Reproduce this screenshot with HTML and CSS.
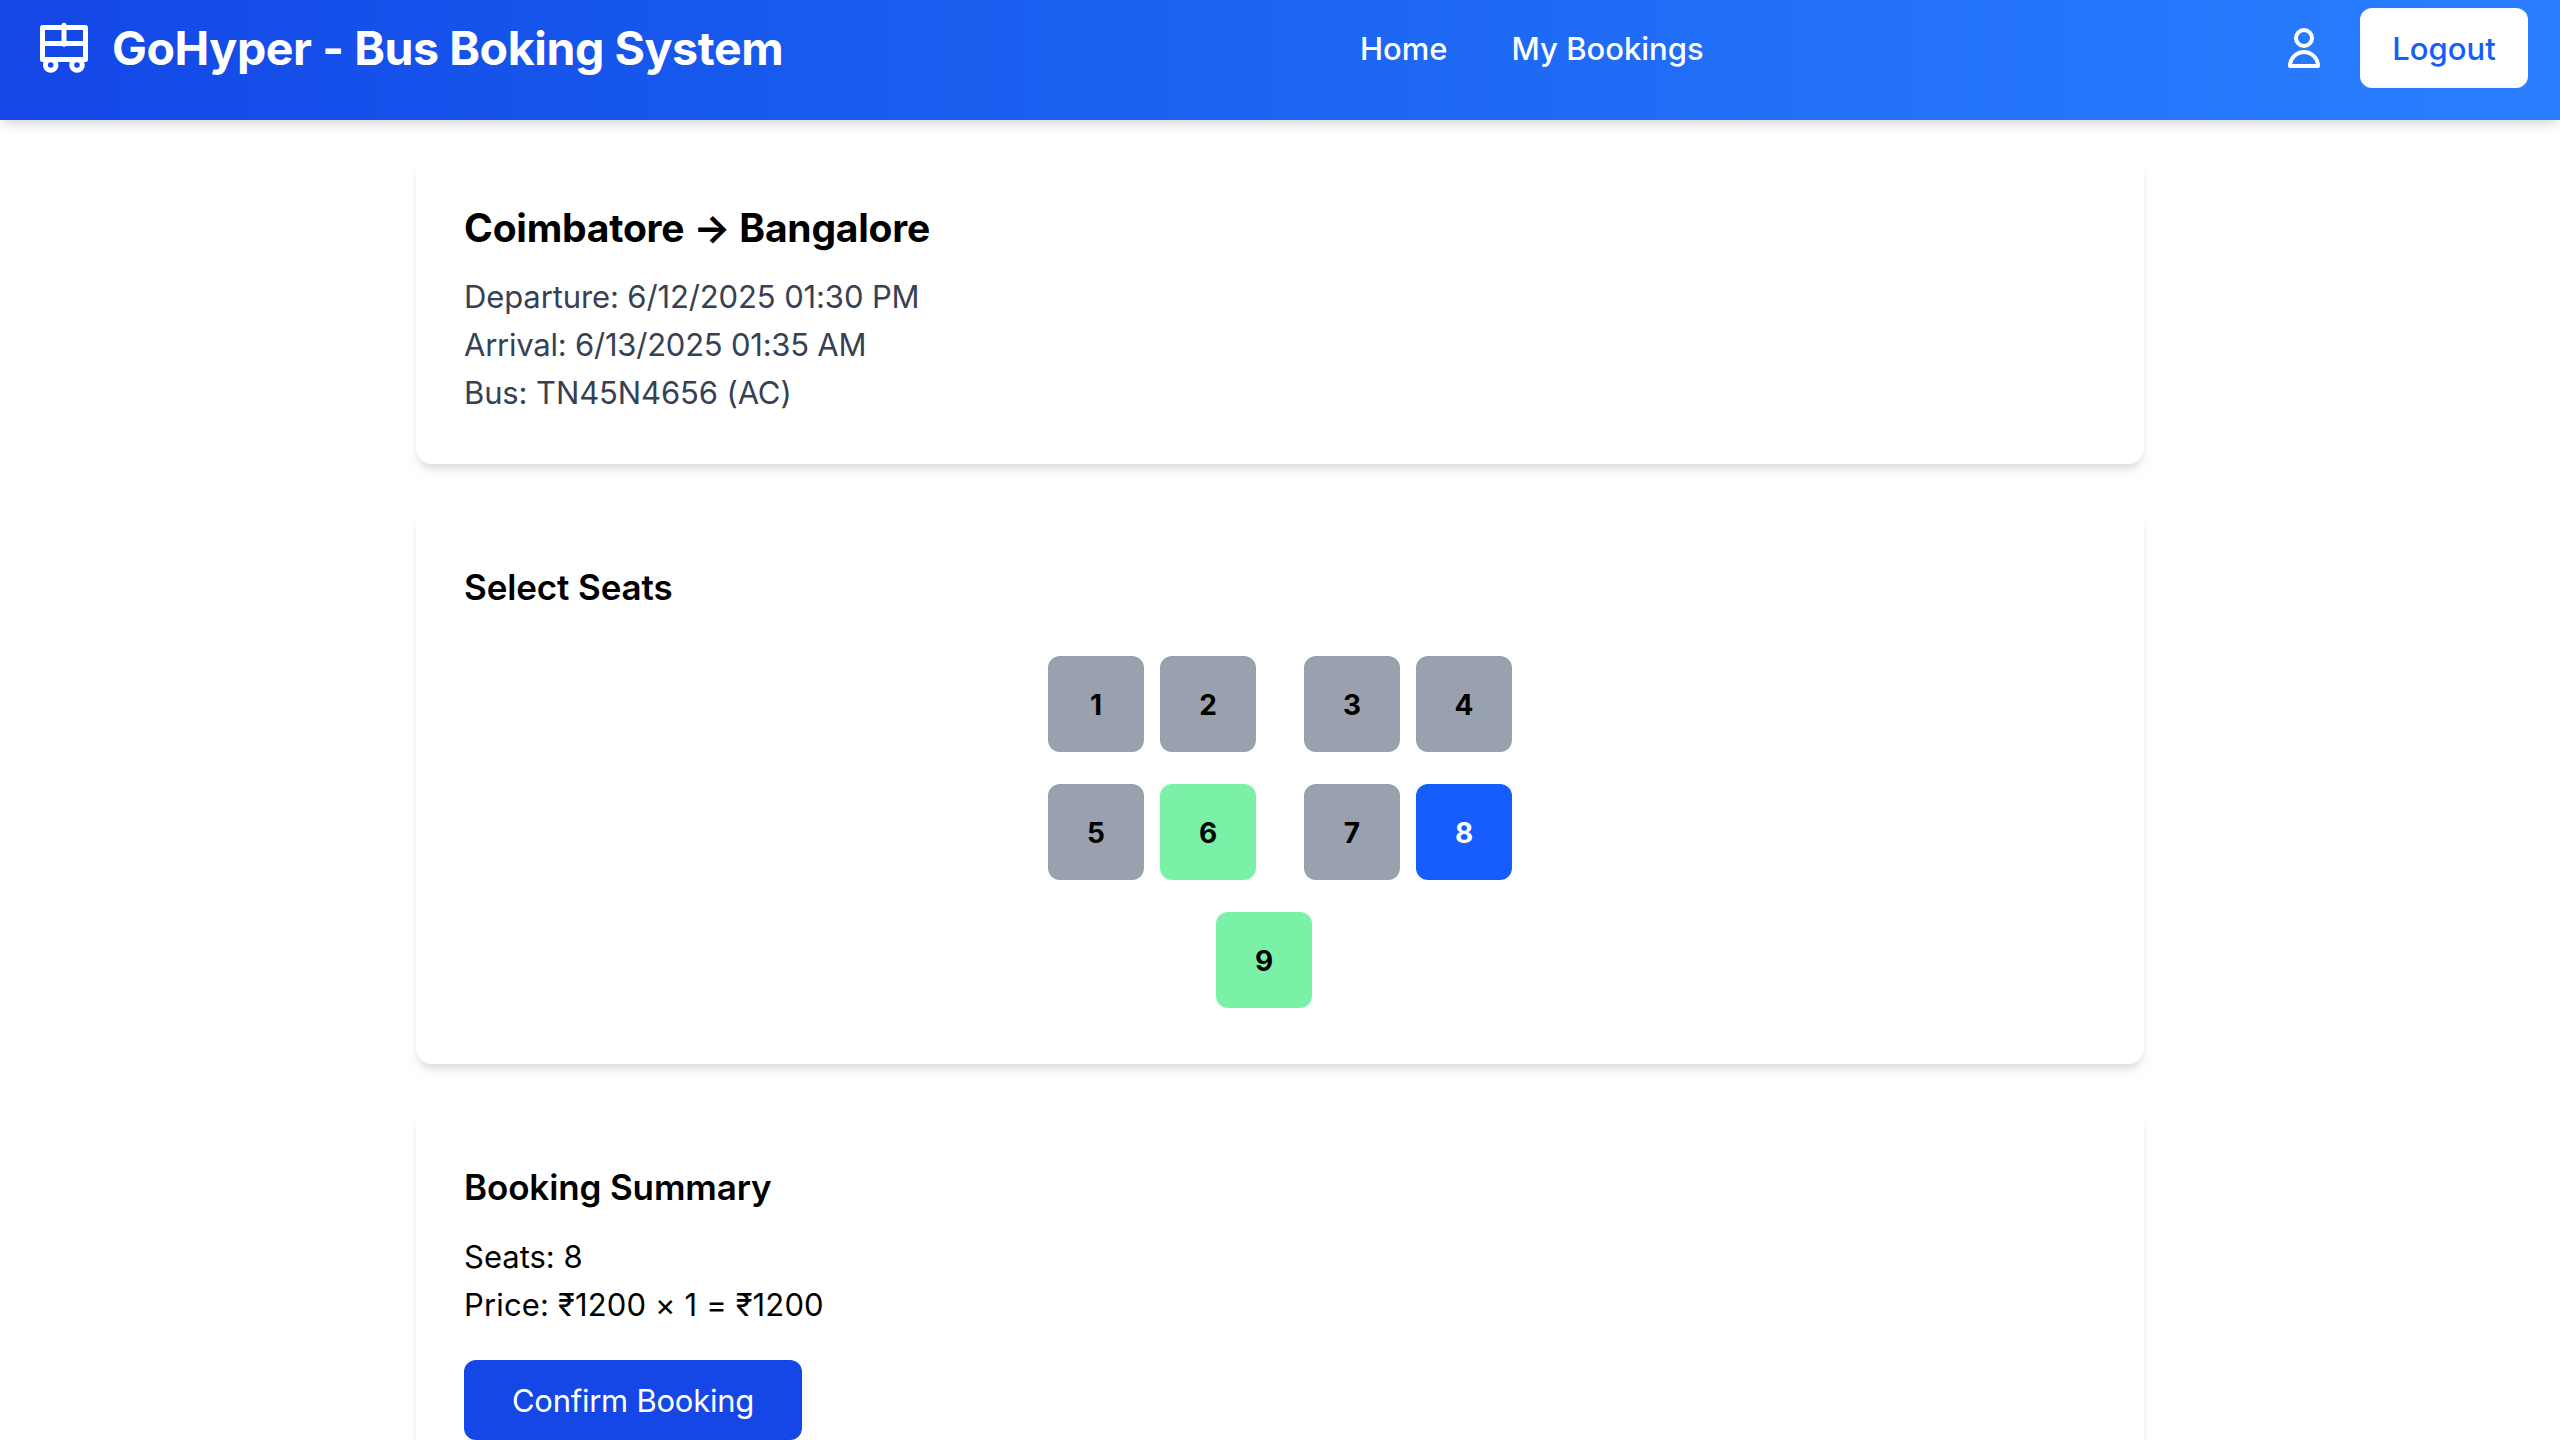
FILE: index.html
```
<!DOCTYPE html>
<html lang="en">
<head>
<meta charset="utf-8">
<title>GoHyper - Bus Boking System</title>
<link rel="stylesheet" href="styles.css">
</head>
<body>
<header class="navbar">
  <a class="brand">
    <svg class="bus-icon" viewBox="0 0 48 52" fill="none" stroke="currentColor" stroke-width="5" stroke-linecap="round" stroke-linejoin="round">
      <path d="M2.5 6.5h43v32h-43zM2.5 22.500h43M24 4.300v19"/>
      <circle cx="10.700" cy="44" r="5.300"/>
      <circle cx="37" cy="44" r="5.300"/>
    </svg>
    <span class="brand-name">GoHyper - Bus Boking System</span>
  </a>
  <nav class="links">
    <a>Home</a>
    <a>My Bookings</a>
  </nav>
  <div class="account">
    <svg class="user-icon" viewBox="0 0 32 40" fill="none" stroke="currentColor" stroke-width="4" stroke-linejoin="round">
      <circle cx="16" cy="10" r="8"/>
      <path d="M2 38a14 14 0 0 1 28 0z"/>
    </svg>
    <button class="logout">Logout</button>
  </div>
</header>
<main class="page">
  <section class="card trip">
    <h1 class="route">Coimbatore → Bangalore</h1>
    <p>Departure: 6/12/2025 01:30 PM</p>
    <p class="arrival">Arrival: 6/13/2025 01:35 AM</p>
    <p>Bus: TN45N4656 (AC)</p>
  </section>
  <section class="card seating">
    <h2 class="heading">Select Seats</h2>
    <div class="seat-map">
      <div class="seat-row">
        <div class="pair"><button class="seat">1</button><button class="seat">2</button></div>
        <div class="pair"><button class="seat">3</button><button class="seat">4</button></div>
      </div>
      <div class="seat-row">
        <div class="pair"><button class="seat">5</button><button class="seat free">6</button></div>
        <div class="pair"><button class="seat">7</button><button class="seat selected">8</button></div>
      </div>
      <div class="seat-row back">
        <button class="seat free">9</button>
      </div>
    </div>
  </section>
  <section class="card summary">
    <h2 class="heading">Booking Summary</h2>
    <p>Seats: 8</p>
    <p class="price">Price: ₹1200 × 1 = ₹1200</p>
    <button class="confirm">Confirm Booking</button>
  </section>
</main>
</body>
</html>
```
FILE: styles.css
```
* {
  box-sizing: border-box;
  margin: 0;
  padding: 0;
}

body {
  height: 1440px;
  overflow: hidden;
  background: #fff;
  color: #000;
  font: 400 31px/48px Inter, "Liberation Sans", sans-serif;
}

button {
  border: 0;
  font: inherit;
}

.navbar {
  display: grid;
  grid-template-columns: 1320px 1fr auto;
  height: 120px;
  padding: 8px 32px 32px 40px;
  align-items: center;
  color: #fff;
  background: linear-gradient(to right in oklab, #1447e6, #2b7fff);
  box-shadow: 0 8px 12px -2px rgb(0 0 0 / 0.1), 0 4px 8px -4px rgb(0 0 0 / 0.1);
}

.brand {
  display: flex;
  align-items: center;
  gap: 24px;
}

.bus-icon {
  width: 48px;
  height: 52px;
  margin-bottom: 3px;
}

.brand-name {
  font-size: 46.500px;
  font-weight: 700;
  line-height: 64px;
  letter-spacing: -0.420px;
}

.links {
  display: flex;
  gap: 64px;
  padding-top: 1px;
  font-weight: 500;
}

.account {
  display: flex;
  align-items: center;
  gap: 40px;
}

.user-icon {
  width: 32px;
  height: 40px;
}

.logout {
  width: 168px;
  height: 80px;
  padding-top: 1px;
  border-radius: 12px;
  background: #fff;
  color: #155dfc;
  font-weight: 500;
}

.page {
  display: flex;
  flex-direction: column;
  gap: 48px;
  width: 1728px;
  margin: 40px auto 0;
}

.card {
  padding: 48px;
  border-radius: 16px;
  background: #fff;
  box-shadow: 0 8px 12px -2px rgb(0 0 0 / 0.1), 0 4px 8px -4px rgb(0 0 0 / 0.1);
}

.trip {
  padding-bottom: 47px;
  color: #364153;
  letter-spacing: -0.120px;
}

.arrival {
  letter-spacing: -0.230px;
}

.route {
  margin-bottom: 25px;
  color: #000;
  font-size: 39px;
  font-weight: 700;
  line-height: 40px;
  letter-spacing: -0.220px;
}

.heading {
  font-size: 35px;
  font-weight: 600;
  line-height: 54px;
  letter-spacing: -0.120px;
}

.seating {
  padding-bottom: 56px;
}

.seat-map {
  display: flex;
  flex-direction: column;
  align-items: center;
  gap: 32px;
  margin-top: 42px;
}

.seat-row {
  display: flex;
  gap: 48px;
}

.back {
  padding-right: 32px;
}

.pair {
  display: flex;
  gap: 16px;
}

.seat {
  width: 96px;
  height: 96px;
  padding-top: 1px;
  border-radius: 12px;
  background: #99a1af;
  color: #000;
  font-size: 28px;
  font-weight: 700;
}

.free {
  background: #7bf1a8;
}

.selected {
  background: #155dfc;
  color: #fff;
}

.summary {
  padding-bottom: 64px;
}

.summary .heading {
  margin-bottom: 19px;
}

.price {
  letter-spacing: 0.150px;
}

.confirm {
  width: 338px;
  height: 80px;
  margin-top: 31px;
  padding-top: 1px;
  border-radius: 12px;
  background: #1447e6;
  color: #fff;
  letter-spacing: -0.250px;
}
```
